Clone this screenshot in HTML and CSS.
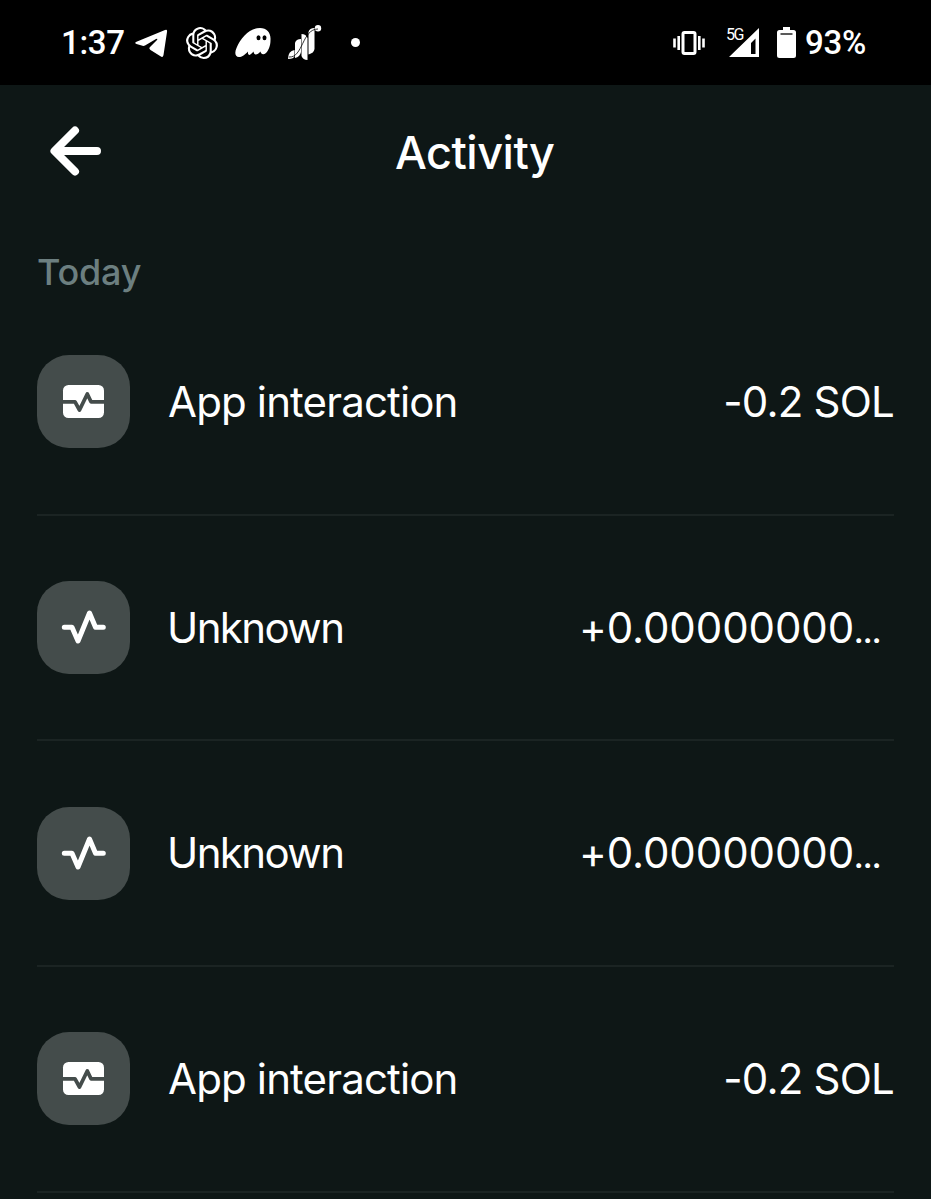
FILE: index.html
```html
<!DOCTYPE html>
<html lang="en">
  <head>
    <meta charset="UTF-8" />
    <title>Activity</title>
    <link rel="stylesheet" href="styles.css">
  </head>
  <body>
    <!-- shared row icons -->
    <svg class="sprite">
      <symbol id="icon-app" viewBox="0 0 93 93">
        <rect x="26" y="30" width="41" height="33" rx="5.5" fill="#fff" />
        <path d="M25 46.8H38L42.5 55L50.3 39L54 46.8H68" fill="none" stroke="#444c4b" stroke-width="3.8" stroke-linejoin="round" />
      </symbol>
      <symbol id="icon-pulse" viewBox="0 0 93 93">
        <path d="M27.300 46.300H35L41 60L52.500 32L58.500 46.300H66.300" fill="none" stroke="#fff" stroke-width="5" stroke-linejoin="round" stroke-linecap="round" />
      </symbol>
    </svg>

    <div class="status-bar">
      <div class="status-left">
        <span class="clock">1:37</span>
        <svg class="telegram" width="34" height="30" viewBox="0 0 34 30">
          <path d="M30 1Q32.500 0 32 3L28.500 26Q28 29 25.500 27.300L15.500 21Q13.500 19.500 15 18L22 11Q23 9 21 10L10 16.500Q8.800 17.200 7.500 16.800L1.500 15Q-1 14 1.500 12.800Z" fill="#fff" />
        </svg>
        <svg class="openai" width="32" height="32" viewBox="0 0 24 24">
          <path fill="#fff" d="M22.2819 9.8211a5.9847 5.9847 0 0 0-.5157-4.9108 6.0462 6.0462 0 0 0-6.5098-2.9A6.0651 6.0651 0 0 0 4.9807 4.1818a5.9847 5.9847 0 0 0-3.9977 2.9 6.0462 6.0462 0 0 0 .7427 7.0966 5.98 5.98 0 0 0 .511 4.9107 6.051 6.051 0 0 0 6.5146 2.9001A5.9847 5.9847 0 0 0 13.2599 24a6.0557 6.0557 0 0 0 5.7718-4.2058 5.9894 5.9894 0 0 0 3.9977-2.9001 6.0557 6.0557 0 0 0-.7475-7.073zm-9.022 12.6081a4.4755 4.4755 0 0 1-2.8764-1.0408l.1419-.0804 4.7783-2.7582a.7948.7948 0 0 0 .3927-.6813v-6.7369l2.02 1.1686a.071.071 0 0 1 .038.052v5.5826a4.504 4.504 0 0 1-4.4945 4.4944zm-9.6607-4.1254a4.4708 4.4708 0 0 1-.5346-3.0137l.142.0852 4.783 2.7582a.7712.7712 0 0 0 .7806 0l5.8428-3.3685v2.3324a.0804.0804 0 0 1-.0332.0615L9.74 19.9502a4.4992 4.4992 0 0 1-6.1408-1.6464zM2.3408 7.8956a4.485 4.485 0 0 1 2.3655-1.9728V11.6a.7664.7664 0 0 0 .3879.6765l5.8144 3.3543-2.0201 1.1685a.0757.0757 0 0 1-.071 0l-4.8303-2.7865A4.504 4.504 0 0 1 2.3408 7.872zm16.5963 3.8558L13.1038 8.364 15.1192 7.2a.0757.0757 0 0 1 .071 0l4.8303 2.7913a4.4944 4.4944 0 0 1-.6765 8.1042v-5.6772a.79.79 0 0 0-.407-.667zm2.0107-3.0231l-.142-.0852-4.7735-2.7818a.7759.7759 0 0 0-.7854 0L9.409 9.2297V6.8974a.0662.0662 0 0 1 .0284-.0615l4.8303-2.7866a4.4992 4.4992 0 0 1 6.6802 4.66zM8.3065 12.863l-2.02-1.1638a.0804.0804 0 0 1-.038-.0567V6.0742a4.4992 4.4992 0 0 1 7.3757-3.4537l-.142.0805L8.704 5.459a.7948.7948 0 0 0-.3927.6813zm1.0976-2.3654l2.602-1.4998 2.6069 1.4998v2.9994l-2.5974 1.4997-2.6067-1.4997Z" />
        </svg>
        <svg class="phantom" width="36" height="30" viewBox="0 0 36 30">
          <path d="M4 29C0 29-.6 24.500 1.500 20C6 9 15 0 25 0C32 0 36 5 35.500 12C35.500 18 33.500 22.500 31 25C28.500 27.200 26 26.500 25.500 23.500C22.500 27 19 28 18.500 23.500C14.500 28.500 12.500 27.500 13 23.500C9 27.500 7 29 4 29Z" fill="#fff" />
          <ellipse cx="23.500" cy="9.700" rx="2" ry="2.500" />
          <ellipse cx="29.500" cy="9.700" rx="2" ry="2.500" />
        </svg>
        <svg class="chart" width="34" height="36" viewBox="0 0 34 36">
          <path d="M0 34Q0 26 6.500 25V31Q6 34 0 34ZM7 18Q8 14 13 14V27Q12 32 7 33ZM13.500 9Q18 9 19.500 13V35Q15 35 13.500 31ZM20.500 7Q21.500 3 26.500 3V24Q26 28 20.500 29.500Z" fill="#fff" />
          <circle cx="30" cy="3.300" r="3.200" fill="#fff" />
          <path d="M1 32C15 33 14 4 30 4" fill="none" stroke="#000" stroke-width=".8" />
        </svg>
        <span class="dot"></span>
      </div>
      <div class="status-right">
        <svg class="vibrate" width="32" height="24" viewBox="0 0 32 24">
          <rect x="10" y="1.500" width="12" height="21" rx="1.500" fill="none" stroke="#fff" stroke-width="3" />
          <path d="M1.500 7.500V16.500M5.700 5V19M26.300 5V19M30.500 7.500V16.500" stroke="#fff" stroke-width="2.600" />
        </svg>
        <div class="signal">
          <span class="network">5G</span>
          <svg width="30" height="29" viewBox="0 0 30 29">
            <path d="M30 0V29H0ZM22 15V26H26.500V10.500Z" fill="#fff" fill-rule="evenodd" />
          </svg>
        </div>
        <svg class="battery" width="19" height="31" viewBox="0 0 19 31">
          <path d="M6 0H13V3H16.500Q19 3 19 5.500V28.500Q19 31 16.500 31H2.500Q0 31 0 28.500V5.500Q0 3 2.500 3H6Z" fill="#fff" />
          <path d="M3.500 7H15.500" stroke="#000" stroke-width="1.300" />
        </svg>
        <span class="percent">93%</span>
      </div>
    </div>

    <header class="header">
      <svg class="back" width="52" height="50" viewBox="0 0 52 50">
        <path d="M25 4.500L4.500 25L25 45.500M5 25H47" fill="none" stroke="#fff" stroke-width="8" stroke-linecap="round" stroke-linejoin="round" />
      </svg>
      <h1 class="title">Activity</h1>
    </header>

    <main class="activity">
      <h2 class="day">Today</h2>
      <div class="row">
        <svg class="icon"><use href="#icon-app" /></svg>
        <span class="name">App interaction</span>
        <span class="amount">-0.2 SOL</span>
      </div>
      <div class="row">
        <svg class="icon"><use href="#icon-pulse" /></svg>
        <span class="name unknown">Unknown</span>
        <span class="amount long">+0.00000000<span class="more">…</span></span>
      </div>
      <div class="row">
        <svg class="icon"><use href="#icon-pulse" /></svg>
        <span class="name unknown">Unknown</span>
        <span class="amount long">+0.00000000<span class="more">…</span></span>
      </div>
      <div class="row">
        <svg class="icon"><use href="#icon-app" /></svg>
        <span class="name">App interaction</span>
        <span class="amount">-0.2 SOL</span>
      </div>
    </main>
  </body>
</html>
```
FILE: styles.css
```css
* {
  box-sizing: border-box;
}

body {
  margin: 0;
  height: 1199px;
  overflow: hidden;
  background: #0e1716;
  color: #fff;
  font-family: Inter, "Liberation Sans", sans-serif;
}

.sprite {
  display: none;
}

svg {
  flex: none;
}

/* Status bar */
.status-bar {
  display: flex;
  justify-content: space-between;
  height: 85px;
  padding: 0 65px 0 61px;
  background: #000;
  font-family: Roboto, sans-serif;
  font-size: 33px;
  font-weight: 500;
  letter-spacing: -0.3px;
}

.status-left,
.status-right {
  display: flex;
  align-items: center;
  height: 85px;
}

.clock {
  width: 74px;
}

.telegram {
  margin-top: 2px;
}

.openai {
  margin-left: 17px;
}

.phantom {
  margin-left: 17px;
}

.chart {
  margin-left: 17px;
}

.dot {
  width: 9px;
  height: 9px;
  margin-left: 29px;
  border-radius: 50%;
  background: #fff;
}

.signal {
  display: flex;
  align-items: center;
  margin-left: 21px;
}

.network {
  width: 16px;
  margin-right: -13px;
  align-self: flex-start;
  font-size: 16px;
  font-weight: 400;
  letter-spacing: -1.5px;
  line-height: 14px;
}

.battery {
  margin-left: 18px;
}

.percent {
  margin-left: 9px;
}

/* Header */
.header {
  display: flex;
  align-items: center;
  height: 131px;
  padding-left: 50px;
}

.title {
  margin: 5px 0 0 293px;
  font-size: 45px;
  font-weight: 500;
  letter-spacing: -0.5px;
  line-height: 56px;
}

/* Activity list */
.activity {
  padding: 0 37px;
}

.day {
  height: 74px;
  margin: 0;
  padding-top: 33px;
  color: #6c7f80;
  font-size: 36px;
  font-weight: 500;
  letter-spacing: -0.2px;
  line-height: 46px;
}

.row {
  display: flex;
  align-items: center;
  height: 225.7px;
  border-bottom: 2px solid #1b2423;
}

.icon {
  width: 93px;
  height: 93px;
  border-radius: 32px;
  background: #444c4b;
}

.name {
  margin-left: 38px;
  padding-bottom: 1px;
  font-size: 42px;
  letter-spacing: -0.85px;
}

.unknown {
  margin-left: 37px;
  letter-spacing: -1.6px;
}

.amount {
  margin-left: auto;
  padding-bottom: 1px;
  font-size: 42px;
  letter-spacing: -0.8px;
  white-space: nowrap;
}

.long {
  margin-right: 14px;
  letter-spacing: -0.1px;
}

.more {
  font-size: 24px;
  font-weight: 900;
  letter-spacing: -1px;
}
```
